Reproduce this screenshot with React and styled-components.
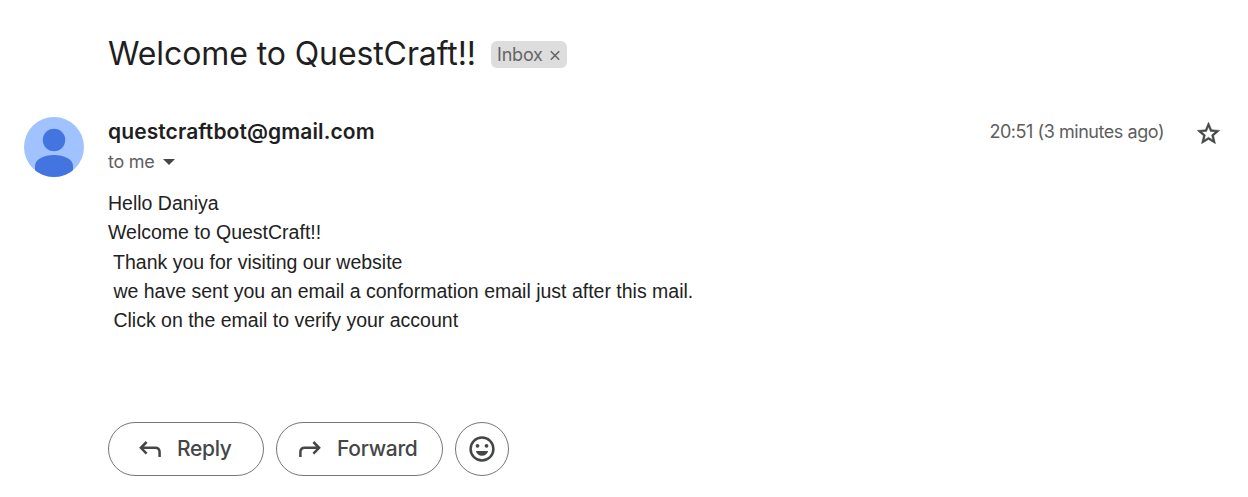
import React from "react";
import styled, { createGlobalStyle } from "styled-components";

const GlobalStyle = createGlobalStyle`
  * { box-sizing: border-box; }
  body { margin: 0; background: #fff; color: #1f1f1f; font-family: Inter, "Liberation Sans", sans-serif; }
`;

const Page = styled.main`
  height: 497px;
  padding: 32px 24px 0;
  display: flex;
  flex-direction: column;
  overflow: hidden;
`;

const Text = styled.span`
  display: block;
  white-space: pre;
  font-size: ${(p) => p.$size}px;
  line-height: ${(p) => p.$line}px;
  font-weight: ${(p) => p.$weight || 400};
  letter-spacing: ${(p) => p.$track || 0}px;
  color: ${(p) => p.$color || "#1f1f1f"};
`;

const SubjectRow = styled.header`
  display: flex;
  align-items: flex-start;
  height: 85px;
  padding-left: 84px;
`;

const Subject = styled.h1`
  width: 383px;
  margin: 0;
  font-size: 32px;
  line-height: 44px;
  font-weight: 400;
  letter-spacing: -0.1px;
  white-space: nowrap;
`;

const Label = styled.div`
  display: flex;
  align-items: center;
  width: 76px;
  height: 27px;
  margin-top: 9px;
  padding-left: 6px;
  gap: 7px;
  border-radius: 6px;
  background: #ddd;
`;

const Message = styled.article`
  display: grid;
  grid-template-columns: 60px 1fr;
  column-gap: 24px;
`;

const Sender = styled.div`
  display: flex;
  justify-content: space-between;
  height: 72px;
`;

const Recipient = styled.div`
  display: flex;
  align-items: center;
  gap: 8px;
`;

const Meta = styled.div`
  display: flex;
  align-items: flex-start;
  gap: 31px;
  padding-right: 2px;
`;

const StarIcon = styled.svg`
  margin-top: 3px;
`;

const Body = styled.div`
  grid-column: 2;
  height: 233px;
  font-family: "Liberation Sans", Arial, sans-serif;
`;

const BodyLine = styled.div`
  white-space: pre;
  height: 29.3px;
  font-size: 19.5px;
  line-height: 29.3px;
  color: #222;
`;

const Actions = styled.footer`
  grid-column: 2;
  display: flex;
  gap: 12px;
`;

const Pill = styled.button`
  display: flex;
  align-items: center;
  width: ${(p) => p.$width}px;
  height: 54px;
  padding: 0 0 0 ${(p) => p.$inset}px;
  gap: ${(p) => p.$gap || 0}px;
  border: 1px solid #747775;
  border-radius: 27px;
  background: #fff;
  font-family: inherit;
`;

export default function App() {
  return (
    <>
      <GlobalStyle />
      <Page>
        <SubjectRow>
          <Subject>Welcome to QuestCraft!!</Subject>
          <Label>
            <Text $size={18} $line={26} $color="#666" $track={-0.2}>Inbox</Text>
            <svg width="10" height="10" viewBox="0 0 10 10">
              <path d="M.8 1.3 9.2 9.7M9.2 1.3.8 9.7" stroke="#666" strokeWidth="1.6" />
            </svg>
          </Label>
        </SubjectRow>
        <Message>
          <svg width="60" height="60" viewBox="0 0 60 60">
            <defs>
              <clipPath id="avatar"><circle cx="30" cy="30" r="30" /></clipPath>
            </defs>
            <g clipPath="url(#avatar)">
              <rect width="60" height="60" fill="#a0c2ff" />
              <circle cx="30" cy="23" r="11.2" fill="#4374e0" />
              <path d="M11 60V49C11 42 20 38 30 38S49 42 49 49V60Z" fill="#4374e0" />
            </g>
          </svg>
          <Sender>
            <div>
              <Text $size={21} $line={30} $weight={600} $track={0.1}>questcraftbot@gmail.com</Text>
              <Recipient>
                <Text $size={18} $line={30} $color="#5e5e5e" $track={-0.25}>to me</Text>
                <svg width="12" height="6" viewBox="0 0 12 6"><path d="M0 0H12L6 6Z" fill="#444746" /></svg>
              </Recipient>
            </div>
            <Meta>
              <Text $size={18} $line={30} $color="#5e5e5e" $track={-0.45}>20:51 (3 minutes ago)</Text>
              <StarIcon width="27" height="27" viewBox="0 0 24 24">
                <path d="M22 9.24l-7.19-.62L12 2 9.19 8.63 2 9.24l5.46 4.73L5.82 21 12 17.27 18.18 21l-1.63-7.03L22 9.24zM12 15.4l-3.76 2.27 1-4.28-3.32-2.88 4.38-.38L12 6.1l1.71 4.04 4.38.38-3.32 2.88 1 4.28L12 15.4z" fill="#444746" stroke="#444746" strokeWidth=".45" />
              </StarIcon>
            </Meta>
          </Sender>
          <Body>
            <BodyLine>Hello Daniya</BodyLine>
            <BodyLine>Welcome to QuestCraft!!</BodyLine>
            <BodyLine> Thank you for visiting our website</BodyLine>
            <BodyLine> we have sent you an email a conformation email just after this mail.</BodyLine>
            <BodyLine> Click on the email to verify your account</BodyLine>
          </Body>
          <Actions>
            <Pill $width={156} $inset={30} $gap={15}>
              <svg width="23" height="20" viewBox="0 0 23 20" fill="none" stroke="#444746" strokeWidth="2.5">
                <path d="M7.6 3 1.9 8.8 7.6 14.6M2 8.8H16.2Q20.6 8.8 20.6 13.2V18" />
              </svg>
              <Text $size={21} $line={30} $weight={500} $color="#444746" $track={-0.3}>Reply</Text>
            </Pill>
            <Pill $width={167} $inset={21} $gap={16}>
              <svg width="23" height="20" viewBox="0 0 23 20" fill="none" stroke="#444746" strokeWidth="2.5">
                <path d="M15.4 3 21.1 8.8 15.4 14.6M21 8.8H6.8Q2.4 8.8 2.4 13.2V18" />
              </svg>
              <Text $size={21} $line={30} $weight={500} $color="#444746" $track={-0.3}>Forward</Text>
            </Pill>
            <Pill $width={54} $inset={13} aria-label="Add reaction">
              <svg width="26" height="26" viewBox="0 0 26 26">
                <circle cx="13" cy="13" r="11.4" fill="none" stroke="#444746" strokeWidth="2.5" />
                <circle cx="8.5" cy="9.8" r="1.9" fill="#444746" />
                <circle cx="17.5" cy="9.8" r="1.9" fill="#444746" />
                <path d="M6.8 15H19.2C18.2 18 16 19.8 13 19.8S7.8 18 6.8 15Z" fill="#444746" />
              </svg>
            </Pill>
          </Actions>
        </Message>
      </Page>
    </>
  );
}
